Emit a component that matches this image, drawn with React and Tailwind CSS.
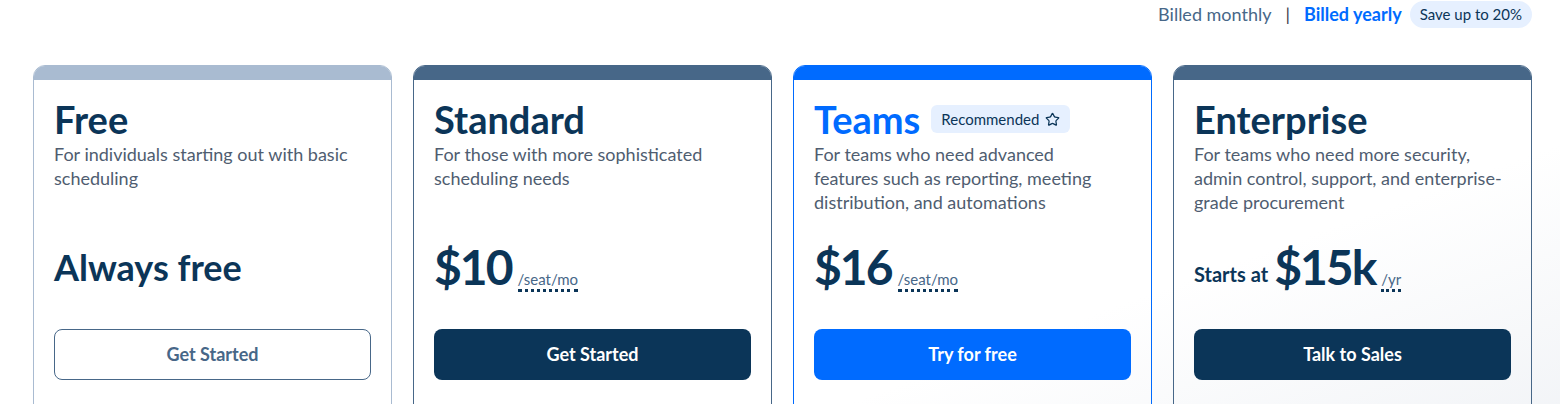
import React from 'react';
import { Star } from 'lucide-react';

const plans = [
  {
    name: 'Free',
    bar: 'bg-[#a9bbd1]',
    border: 'border-[#a9bbd1]',
    desc: ['For individuals starting out with basic', 'scheduling'],
    cta: 'Get Started',
    btn: 'border border-[#476788] text-[#476788] bg-white',
  },
  {
    name: 'Standard',
    bar: 'bg-[#476788]',
    border: 'border-[#476788]',
    desc: ['For those with more sophisticated', 'scheduling needs'],
    price: '$10',
    unit: '/seat/mo',
    cta: 'Get Started',
    btn: 'bg-[#0b3558] text-white',
  },
  {
    name: 'Teams',
    bar: 'bg-[#006bff]',
    border: 'border-[#006bff]',
    desc: ['For teams who need advanced', 'features such as reporting, meeting', 'distribution, and automations'],
    price: '$16',
    unit: '/seat/mo',
    cta: 'Try for free',
    btn: 'bg-[#006bff] text-white',
    recommended: true,
  },
  {
    name: 'Enterprise',
    bar: 'bg-[#476788]',
    border: 'border-[#476788]',
    desc: ['For teams who need more security,', 'admin control, support, and enterprise-', 'grade procurement'],
    prefix: 'Starts at',
    price: '$15k',
    unit: '/yr',
    cta: 'Talk to Sales',
    btn: 'bg-[#0b3558] text-white',
  },
];

function PlanCard({ plan }) {
  return (
    <div className={`flex-1 rounded-t-[12px] overflow-hidden border ${plan.border}`}>
      <div className={`h-[14px] ${plan.bar}`} />
      <div className="px-[20px] pt-[19px] pb-[40px]">
        <div className="flex items-center gap-[11px]">
          <h2 className={`text-[38px] leading-[40px] font-bold ${plan.recommended ? 'text-[#006bff]' : 'text-[#0b3558]'}`}>
            {plan.name}
          </h2>
          {plan.recommended && (
            <span className="flex items-center gap-[6px] bg-[#e6f0ff] rounded-[6px] px-[10px] h-[28px] text-[15px] text-[#0b3558]">
              Recommended
              <Star size={15} strokeWidth={2} className="text-[#0b3558]" />
            </span>
          )}
        </div>
        <p className="mt-[3px] h-[88px] text-[18px] leading-[24px] text-[#4f5d70]">
          {plan.desc.map((line, i) => (
            <span key={i} className="block whitespace-nowrap">{line}</span>
          ))}
        </p>
        <div className="h-[74px] flex items-center">
          {plan.price ? (
            <div className="flex items-end">
              {plan.prefix && (
                <span className="text-[20px] font-bold text-[#0b3558] mr-[6px] mb-[4px]">{plan.prefix}</span>
              )}
              <span className="text-[48px] leading-[52px] font-bold text-[#0b3558] tracking-[-2px]">{plan.price}</span>
              <span className="ml-[6px] mb-[1px] text-[15px] leading-[20px] text-[#476788] border-b-[3px] border-dotted border-[#0b3558]">
                {plan.unit}
              </span>
            </div>
          ) : (
            <div className="text-[36px] font-bold text-[#0b3558]">Always free</div>
          )}
        </div>
        <button className={`mt-[25px] w-full h-[51px] rounded-[8px] text-[18px] font-bold ${plan.btn}`}>
          {plan.cta}
        </button>
      </div>
    </div>
  );
}

export default function App() {
  return (
    <div
      className="min-h-[404px] bg-[linear-gradient(160deg,#ffffff_72%,#f2f4f7_100%)] pl-[33px] pr-[28px]"
      style={{ fontFamily: 'Lato, "Noto Sans", sans-serif' }}
    >
      <div className="flex justify-end items-center h-[28px] text-[18px]">
        <span className="text-[#476788]">Billed monthly</span>
        <span className="mx-[14px] text-[#3a3a4a]">|</span>
        <span className="font-bold text-[#006bff]">Billed yearly</span>
        <span className="ml-[8px] bg-[#e6f0ff] rounded-full px-[10px] h-[27px] flex items-center text-[15px] text-[#0b3558]">
          Save up to 20%
        </span>
      </div>
      <div className="mt-[37px] flex gap-[21px]">
        {plans.map((p) => (
          <PlanCard key={p.name} plan={p} />
        ))}
      </div>
    </div>
  );
}
